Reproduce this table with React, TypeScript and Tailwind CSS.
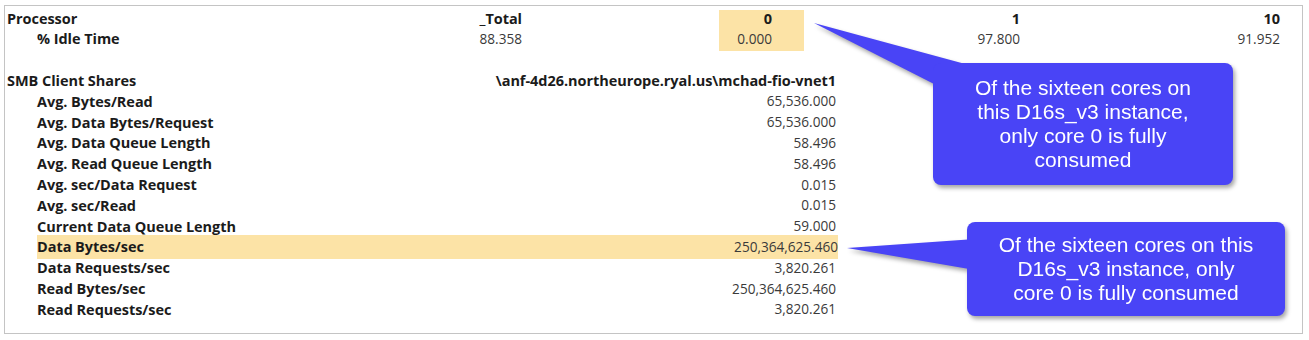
const smbRows = [
  { label: "Avg. Bytes/Read", value: "65,536.000" },
  { label: "Avg. Data Bytes/Request", value: "65,536.000" },
  { label: "Avg. Data Queue Length", value: "58.496" },
  { label: "Avg. Read Queue Length", value: "58.496" },
  { label: "Avg. sec/Data Request", value: "0.015" },
  { label: "Avg. sec/Read", value: "0.015" },
  { label: "Current Data Queue Length", value: "59.000" },
  { label: "Data Bytes/sec", value: "250,364,625.460", hot: true },
  { label: "Data Requests/sec", value: "3,820.261" },
  { label: "Read Bytes/sec", value: "250,364,625.460" },
  { label: "Read Requests/sec", value: "3,820.261" },
];

const row = "h-[20.8px] flex items-center whitespace-nowrap";
const label = "font-bold text-[14.5px] tracking-[-0.05px] text-[#1b1b1b]";
const value = "text-[13.6px] text-[#3a3a3a]";

function Callout({
  box,
  points,
  lines,
}: {
  box: string;
  points: string;
  lines: string[];
}) {
  return (
    <div className="absolute inset-0 pointer-events-none drop-shadow-[2px_3px_2px_rgba(0,0,0,0.35)]">
      <svg className="absolute left-0 top-0" width="1309" height="340">
        <polygon points={points} fill="#4944f6" />
      </svg>
      <div
        className={`absolute rounded-[8px] bg-[#4944f6] flex flex-col items-center justify-center text-white text-[21px] leading-[24px] font-['Liberation_Sans',Arial,sans-serif] ${box}`}
      >
        {lines.map((l) => (
          <div key={l}>{l}</div>
        ))}
      </div>
    </div>
  );
}

export default function App() {
  return (
    <div className="relative w-[1309px] h-[340px] bg-white pl-[4px] pt-[5px] font-['Open_Sans',sans-serif]">
      <div className="w-[1299px] h-[329px] border border-[#c4c4c4] pt-[2px]">
        {/* processor */}
        <div className="flex">
          <div className="w-[435px] pl-[2px]">
            <div className={`${row} ${label}`}>Processor</div>
            <div className={`${row} ${label} pl-[30px]`}>% Idle Time</div>
          </div>
          <div className="w-[82px] text-right">
            <div className={`${row} justify-end ${label}`}>_Total</div>
            <div className={`${row} justify-end ${value}`}>88.358</div>
          </div>
          <div className="w-[197px]" />
          <div className="w-[85px] mt-[2px] h-[41px] bg-[#fce3a6] pr-[32px] -mb-[2px]">
            <div className={`${row} justify-end ${label} -mt-[2px]`}>0</div>
            <div className={`${row} justify-end ${value}`}>0.000</div>
          </div>
          <div className="w-[216px]">
            <div className={`${row} justify-end ${label}`}>1</div>
            <div className={`${row} justify-end ${value}`}>97.800</div>
          </div>
          <div className="w-[260px]">
            <div className={`${row} justify-end ${label}`}>10</div>
            <div className={`${row} justify-end ${value}`}>91.952</div>
          </div>
        </div>

        <div className="h-[20.8px]" />

        {/* smb */}
        <div className="w-[833px]">
          <div className={`${row} pl-[2px] justify-between`}>
            <span className={label}>SMB Client Shares</span>
            <span className={`${label} pr-[2px]`}>\anf-4d26.northeurope.ryal.us\mchad-fio-vnet1</span>
          </div>
          {smbRows.map((r) =>
            r.hot ? (
              <div
                key={r.label}
                className={`${row} ml-[32px] justify-between bg-[#fce3a6] -my-[1.5px] h-[23.8px]`}
              >
                <span className={label}>{r.label}</span>
                <span className={value}>{r.value}</span>
              </div>
            ) : (
              <div key={r.label} className={`${row} pl-[32px] justify-between pr-[2px]`}>
                <span className={label}>{r.label}</span>
                <span className={value}>{r.value}</span>
              </div>
            )
          )}
        </div>
      </div>

      <Callout
        box="left-[933px] top-[63px] w-[300px] h-[122px]"
        points="814,23 980,68 936,85"
        lines={["Of the sixteen cores on", "this D16s_v3 instance,", "only core 0 is fully", "consumed"]}
      />
      <Callout
        box="left-[967px] top-[222px] w-[318px] h-[94px]"
        points="847,248 975,239 975,270"
        lines={["Of the sixteen cores on this", "D16s_v3 instance, only", "core 0 is fully consumed"]}
      />
    </div>
  );
}
